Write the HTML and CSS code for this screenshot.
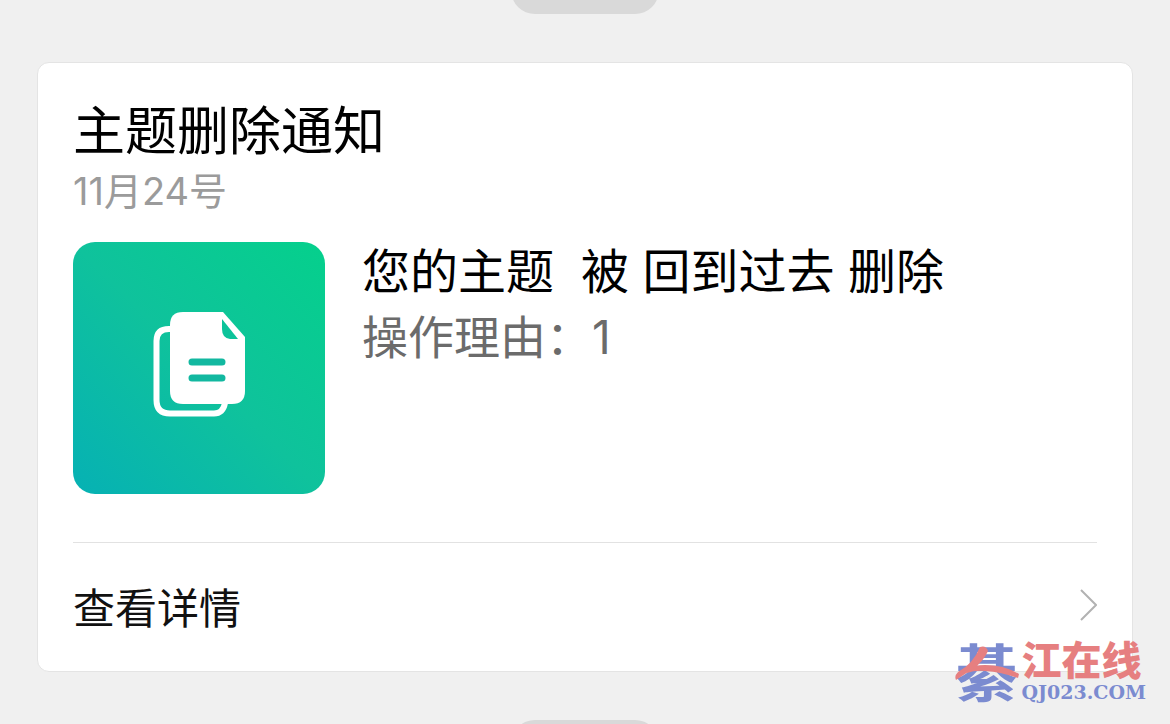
FILE: index.html
```
<!doctype html>
<html lang="zh-CN">
<head>
<meta charset="utf-8">
<meta name="viewport" content="width=device-width, initial-scale=1">
<title>主题删除通知</title>
<link rel="stylesheet" href="styles.css">
</head>

<body>
	<div class="chat">
		<div class="time"></div>

		<div class="card">
			<h1 class="title">主题删除通知</h1>
			<p class="date">11月24号</p>

			<div class="content">
				<svg class="thumb" viewBox="0 0 252 252" aria-hidden="true">
					<defs>
						<linearGradient id="green" x1="1" y1="0" x2="0" y2="1">
							<stop offset="0" stop-color="#05d08c"/>
							<stop offset="0.5" stop-color="#0fc29c"/>
							<stop offset="1" stop-color="#06b1b4"/>
						</linearGradient>
					</defs>
					<rect width="252" height="252" rx="22" fill="url(#green)"/>
					<!-- back sheet -->
					<path d="M98 87H96Q83.500 87 83.500 99V158Q83.500 171.500 97 171.500H141Q150 171.500 152 161" fill="none" stroke="#fff" stroke-width="6"/>
					<!-- front sheet -->
					<path d="M110 70H150L172 95V149Q172 162 159 162H110Q97 162 97 149V83Q97 70 110 70Z" fill="#fff"/>
					<path d="M149 77L165 97H157Q149 96 149 87Z" fill="#0cc39a"/>
					<path d="M119 120H149M119 136H149" stroke="#12b8a0" stroke-width="7" stroke-linecap="round"/>
				</svg>
				<div class="text">
					<p class="message">您的主题&nbsp; 被 回到过去 删除</p>
					<p class="reason">操作理由：1</p>
				</div>
			</div>

			<a href="#" class="more">
				<span>查看详情</span>
				<svg class="arrow" viewBox="0 0 18 32" aria-hidden="true"><path d="M2 1L17 16L2 31" fill="none" stroke="#b2b2b2" stroke-width="2"/></svg>
			</a>
		</div>

		<div class="time"></div>

		<div class="watermark">
			<div class="mark">
				<span>綦</span>
				<svg class="swoosh" viewBox="0 0 64 60" aria-hidden="true"><path d="M25 7Q31 5 33 11Q28 22 19 28Q10 34 1 40Q-1 36 3 32Q18 24 25 7ZM12 29Q20 25 30 25Q49 25 64 34L63 38Q46 32 30 31Q20 30 12 33Z" fill="#e67f80"/></svg>
			</div>
			<div class="site">
				<span class="name">江在线</span>
				<span class="domain">QJ023.COM</span>
			</div>
		</div>
	</div>
</body>
</html>
```
FILE: styles.css
```
* {
	box-sizing: border-box;
}

body {
	margin: 0;
	background: #f0f0f0;
	font-family: Inter, "Noto Sans CJK SC", sans-serif;
	color: #000;
}

h1, p {
	margin: 0;
	font-weight: 400;
}

.chat {
	position: relative;
	height: 100vh;
	padding: 0 37px;
	overflow: hidden;
}

/* time labels, cut off by the edges of the screen */
.time {
	width: 148px;
	height: 60px;
	margin: -46px auto 48px;
	border-radius: 24px;
	background: #d9d9d9;
}

.card {
	margin-bottom: 48px;
	padding: 37px 35px 0;
	border: 1px solid #e4e4e4;
	border-radius: 12px;
	background: #fff;
}

.card + .time {
	margin: 0 auto;
}

.title {
	font-size: 52px;
	line-height: 64px;
}

.date {
	font-size: 38px;
	line-height: 54px;
	color: #9b9b9b;
}

.content {
	display: flex;
	gap: 37px;
	padding: 24px 0 48px;
}

.thumb {
	flex: none;
	width: 252px;
	height: 252px;
}

.message {
	font-size: 48px;
	line-height: 60px;
}

.reason {
	font-size: 46px;
	line-height: 70px;
	color: #6b6b6b;
}

.more {
	display: flex;
	align-items: center;
	justify-content: space-between;
	height: 129px;
	padding-bottom: 4px;
	border-top: 1px solid #e2e2e2;
	font-size: 42px;
	color: #111;
	text-decoration: none;
}

.arrow {
	width: 18px;
	height: 32px;
}

.watermark {
	position: absolute;
	right: 24px;
	bottom: 20px;
	display: flex;
	gap: 4px;
	font-family: "Noto Sans CJK SC", sans-serif;
	font-weight: 700;
}

.mark {
	position: relative;
	width: 62px;
	font-size: 62px;
	line-height: 60px;
	color: #7b8bd0;
}

.swoosh {
	position: absolute;
	top: 0;
	left: 0;
	width: 64px;
	height: 60px;
}

.site {
	display: flex;
	flex-direction: column;
}

.name {
	font-size: 40px;
	font-weight: 900;
	line-height: 36px;
	color: #e67f80;
}

.domain {
	padding-top: 4px;
	font-family: "DejaVu Serif", serif;
	font-size: 19px;
	line-height: 24px;
	color: #7b8bd0;
}
```
